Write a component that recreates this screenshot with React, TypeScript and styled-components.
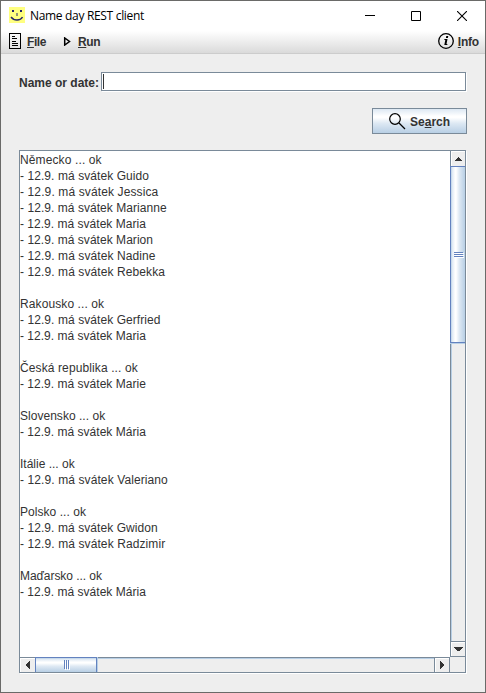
import React from "react";
import styled, { createGlobalStyle } from "styled-components";

const steel = "#7a8a99";
const blue = "#6382bf";

const GlobalStyle = createGlobalStyle`
  * { box-sizing: border-box; }
  html, body { margin: 0; padding: 0; overflow: hidden; }
  svg { display: block; flex: none; }
`;

const Window = styled.div`
  width: 486px;
  height: 693px;
  display: flex;
  flex-direction: column;
  border: 1px solid #6a6a68;
  background: #eeeeee;
  color: #333333;
  font-family: "Liberation Sans", Arial, sans-serif;
  font-size: 12px;
`;

const TitleBar = styled.header`
  height: 30px;
  flex: none;
  display: flex;
  align-items: center;
  padding-left: 8px;
  background: #ffffff;
  color: #000000;
`;

const AppIcon = styled.svg`
  margin-bottom: 2px;
`;

const Title = styled.span`
  margin-left: 5px;
  flex: 1;
  white-space: nowrap;
  font-family: "Open Sans", "Noto Sans", sans-serif;
  font-size: 12px;
  line-height: 16px;
  letter-spacing: -0.32px;
`;

const WindowButton = styled.button`
  width: 46px;
  height: 29px;
  padding: 0;
  border: 0;
  background: none;
  display: flex;
  align-items: center;
  justify-content: center;
`;

const MenuBar = styled.nav`
  height: 23px;
  flex: none;
  display: flex;
  align-items: center;
  padding: 0 6px 2px 8px;
  background: linear-gradient(#ffffff, #dadada);
  border-bottom: 1px solid #cccccc;
`;

const MenuItem = styled.div<{ $width?: number; $right?: boolean }>`
  display: flex;
  align-items: center;
  width: ${(p) => (p.$width ? `${p.$width}px` : "auto")};
  margin-left: ${(p) => (p.$right ? "auto" : "0")};
`;

const Label = styled.span<{ $gap?: number; $tracking?: number }>`
  margin-left: ${(p) => p.$gap ?? 0}px;
  padding-top: 2px;
  font-weight: bold;
  line-height: 16px;
  white-space: nowrap;
  letter-spacing: ${(p) => p.$tracking ?? 0}px;
`;

const Mnemonic = styled.span`
  text-decoration: underline;
  text-decoration-thickness: 1px;
  text-underline-offset: 1px;
  text-decoration-skip-ink: none;
`;

const Content = styled.main`
  flex: 1;
  display: flex;
  flex-direction: column;
  padding: 18px 18px 0;
`;

const FieldRow = styled.div`
  display: flex;
  align-items: center;
  height: 20px;
`;

const Etched = styled.div`
  border: 1px solid ${steel};
  box-shadow: 1px 1px 0 #ffffff;
`;

const Field = styled(Etched)`
  width: 365px;
  height: 19px;
  margin: 0 1px 1px auto;
  padding: 1px;
  background: #ffffff;
`;

const Caret = styled.div`
  width: 1px;
  height: 15px;
  background: #333333;
`;

const SearchButton = styled.button`
  align-self: flex-end;
  width: 95px;
  height: 26px;
  margin-top: 16px;
  padding: 0 0 0 16px;
  display: flex;
  align-items: center;
  border: 1px solid ${steel};
  background: linear-gradient(#dde8f3 0%, #ffffff 30%, #ffffff 36%, #dde8f3 60%, #b8cfe5 100%);
  font: inherit;
  color: inherit;
`;

const ScrollPane = styled(Etched)`
  width: 447px;
  height: 523px;
  margin-top: 16px;
  display: flex;
  flex-direction: column;
`;

const PaneRow = styled.div<{ $height: number }>`
  display: flex;
  height: ${(p) => p.$height}px;
`;

const TextArea = styled.div`
  flex: 1;
  background: #ffffff;
  padding-top: 1px;
  overflow: hidden;
`;

const Line = styled.div<{ $tracking: number }>`
  height: 16px;
  line-height: 16px;
  white-space: pre;
  letter-spacing: ${(p) => p.$tracking}px;
`;

const VBar = styled.div`
  width: 15px;
  display: flex;
  flex-direction: column;
  border-left: 1px solid ${steel};
`;

const HBar = styled.div`
  flex: 1;
  display: flex;
  border-top: 1px solid ${steel};
`;

const VTrack = styled.div`
  flex: 1;
  box-shadow: inset 1px 0 0 #b8cfe5;
`;

const HTrack = styled.div`
  flex: 1;
  display: flex;
  box-shadow: inset 0 1px 0 #b8cfe5;
`;

const VThumb = styled.div`
  height: 177px;
  margin-left: -1px;
  padding: 1px 0 0 2px;
  display: flex;
  align-items: center;
  justify-content: center;
  border: solid ${blue};
  border-width: 1px 0 1px 1px;
  background: linear-gradient(90deg, #c8daec 0 1px, #dde8f3 1px, #ffffff 30%, #ffffff 36%, #dde8f3 60%, #b8cfe5 100%);
  box-shadow: 0 1px 0 #b8cfe5;
`;

const HThumb = styled.div`
  width: 62px;
  margin-top: -1px;
  padding-left: 2px;
  display: flex;
  align-items: center;
  justify-content: center;
  border: solid ${blue};
  border-width: 1px 1px 0;
  background: linear-gradient(#c8daec 0 1px, #dde8f3 1px, #ffffff 30%, #ffffff 36%, #dde8f3 60%, #b8cfe5 100%);
  box-shadow: 1px 0 0 #b8cfe5;
`;

type Side = "up" | "down" | "left" | "right";

const Arrow = styled.div<{ $side: Side }>`
  flex: none;
  width: ${(p) => (p.$side === "left" || p.$side === "right" ? 15 : 14)}px;
  height: ${(p) => (p.$side === "up" ? 15 : p.$side === "down" ? 16 : 14)}px;
  padding-left: ${(p) => (p.$side === "right" ? 0 : 1)}px;
  padding-top: ${(p) => (p.$side === "up" ? 1 : 0)}px;
  display: flex;
  align-items: center;
  justify-content: center;
  background: #eeeeee;
  box-shadow: inset 1px 1px 0 #ffffff;
  border: 0 solid ${steel};
  border-top-width: ${(p) => (p.$side === "down" ? 1 : 0)}px;
  border-bottom-width: ${(p) => (p.$side === "down" ? 1 : 0)}px;
  border-left-width: ${(p) => (p.$side === "right" ? 1 : 0)}px;
`;

const Corner = styled.div`
  width: 16px;
  border-left: 1px solid ${steel};
`;

const arrows: Record<Side, { w: number; h: number; d: string }> = {
  up: { w: 7, h: 4, d: "M3 0h1v1h1v1h1v1h1v1H0V3h1V2h1V1h1z" },
  down: { w: 9, h: 4, d: "M0 0h9v1H8v1H7v1H6v1H3V3H2V2H1V1H0z" },
  left: { w: 4, h: 8, d: "M3 0h1v8H3V7H2V6H1V5H0V3h1V2h1V1h1z" },
  right: { w: 4, h: 8, d: "M0 0h1v1h1v1h1v1h1v2H3v1H2v1H1v1H0z" },
};

const ArrowButton = ({ side }: { side: Side }) => (
  <Arrow $side={side}>
    <svg width={arrows[side].w} height={arrows[side].h} shapeRendering="crispEdges">
      <path d={arrows[side].d} fill="#333333" />
    </svg>
  </Arrow>
);

// Each entry pairs a line of output with its letter spacing.
const lines: [string, number][] = [
  ["Německo ... ok", 0.12],
  ["- 12.9. má svátek Guido", 0.07],
  ["- 12.9. má svátek Jessica", 0.12],
  ["- 12.9. má svátek Marianne", 0.05],
  ["- 12.9. má svátek Maria", 0.02],
  ["- 12.9. má svátek Marion", 0.04],
  ["- 12.9. má svátek Nadine", 0.09],
  ["- 12.9. má svátek Rebekka", 0.09],
  ["", 0],
  ["Rakousko ... ok", 0.1],
  ["- 12.9. má svátek Gerfried", 0.07],
  ["- 12.9. má svátek Maria", 0.02],
  ["", 0],
  ["Česká republika ... ok", 0.11],
  ["- 12.9. má svátek Marie", 0.02],
  ["", 0],
  ["Slovensko ... ok", 0.03],
  ["- 12.9. má svátek Mária", 0.02],
  ["", 0],
  ["Itálie ... ok", 0],
  ["- 12.9. má svátek Valeriano", 0.1],
  ["", 0],
  ["Polsko ... ok", 0.05],
  ["- 12.9. má svátek Gwidon", 0.07],
  ["- 12.9. má svátek Radzimir", 0.1],
  ["", 0],
  ["Maďarsko ... ok", -0.06],
  ["- 12.9. má svátek Mária", 0.02],
];

export default function App() {
  return (
    <>
      <GlobalStyle />
      <Window>
        <TitleBar>
          <AppIcon width="16" height="16">
            <rect width="16" height="16" fill="#ffff80" />
            <path d="M3 3h2v2H3zM11 3h2v2h-2zM7.500 6h1v3h-1z" fill="#26266a" />
            <path d="M2 10c1.500 2 3.500 3 6 3s4.500-1 5.500-3" fill="none" stroke="#26266a" strokeWidth="1.400" />
          </AppIcon>
          <Title>Name day REST client</Title>
          <WindowButton aria-label="Minimize">
            <svg width="10" height="10" shapeRendering="crispEdges"><path d="M0 4h10v1H0z" /></svg>
          </WindowButton>
          <WindowButton aria-label="Maximize">
            <svg width="10" height="10"><path d="M.5.5h9v9h-9z" fill="none" stroke="#000" /></svg>
          </WindowButton>
          <WindowButton aria-label="Close">
            <svg width="10" height="10"><path d="M0 0l10 10M10 0L0 10" stroke="#000" strokeWidth="1.100" /></svg>
          </WindowButton>
        </TitleBar>
        <MenuBar>
          <MenuItem $width={54}>
            <svg width="12" height="16" shapeRendering="crispEdges">
              <path d="M0 0h12v16H0zM1 1v14h10V1z" fillRule="evenodd" />
              <path d="M3 3h3v1H3zM3 5h5v1H3zM3 8h4v1H3zM3 10h6v1H3zM3 12h6v1H3z" />
            </svg>
            <Label $gap={6} $tracking={-0.4}><Mnemonic>F</Mnemonic>ile</Label>
          </MenuItem>
          <MenuItem>
            <svg width="8" height="9"><path d="M1.700 1v7L6.500 4.500z" fill="none" stroke="#000" strokeWidth="1.500" /></svg>
            <Label $gap={7} $tracking={-0.4}><Mnemonic>R</Mnemonic>un</Label>
          </MenuItem>
          <MenuItem $right>
            <svg width="16" height="16">
              <circle cx="8" cy="8" r="7.300" fill="none" stroke="#000" strokeWidth="1.300" />
              <path d="M8.300 3h2l-.4 2h-2zM6.500 6h3l-1 5h1l-.3 1H6.300l1-5h-1z" />
            </svg>
            <Label $gap={4} $tracking={-0.2}><Mnemonic>I</Mnemonic>nfo</Label>
          </MenuItem>
        </MenuBar>
        <Content>
          <FieldRow>
            <Label>Name or date:</Label>
            <Field><Caret /></Field>
          </FieldRow>
          <SearchButton>
            <svg width="17" height="17">
              <circle cx="6" cy="6" r="5.300" fill="none" stroke="#000" strokeWidth="1.200" />
              <path d="M10 10l6 6" stroke="#000" strokeWidth="1.200" />
            </svg>
            <Label $gap={4}>Se<Mnemonic>a</Mnemonic>rch</Label>
          </SearchButton>
          <ScrollPane>
            <PaneRow $height={506}>
              <TextArea>
                {lines.map(([text, tracking], i) => (
                  <Line key={i} $tracking={tracking}>{text}</Line>
                ))}
              </TextArea>
              <VBar>
                <ArrowButton side="up" />
                <VTrack>
                  <VThumb>
                    <svg width="10" height="6" shapeRendering="crispEdges">
                      <path d="M1 1h9v1H1zM1 3h9v1H1zM1 5h9v1H1z" fill="#fff" />
                      <path d="M0 0h9v1H0zM0 2h9v1H0zM0 4h9v1H0z" fill={blue} />
                    </svg>
                  </VThumb>
                </VTrack>
                <ArrowButton side="down" />
              </VBar>
            </PaneRow>
            <PaneRow $height={15}>
              <HBar>
                <ArrowButton side="left" />
                <HTrack>
                  <HThumb>
                    <svg width="6" height="10" shapeRendering="crispEdges">
                      <path d="M1 1h1v9H1zM3 1h1v9H3zM5 1h1v9H5z" fill="#fff" />
                      <path d="M0 0h1v9H0zM2 0h1v9H2zM4 0h1v9H4z" fill={blue} />
                    </svg>
                  </HThumb>
                </HTrack>
                <ArrowButton side="right" />
              </HBar>
              <Corner />
            </PaneRow>
          </ScrollPane>
        </Content>
      </Window>
    </>
  );
}
